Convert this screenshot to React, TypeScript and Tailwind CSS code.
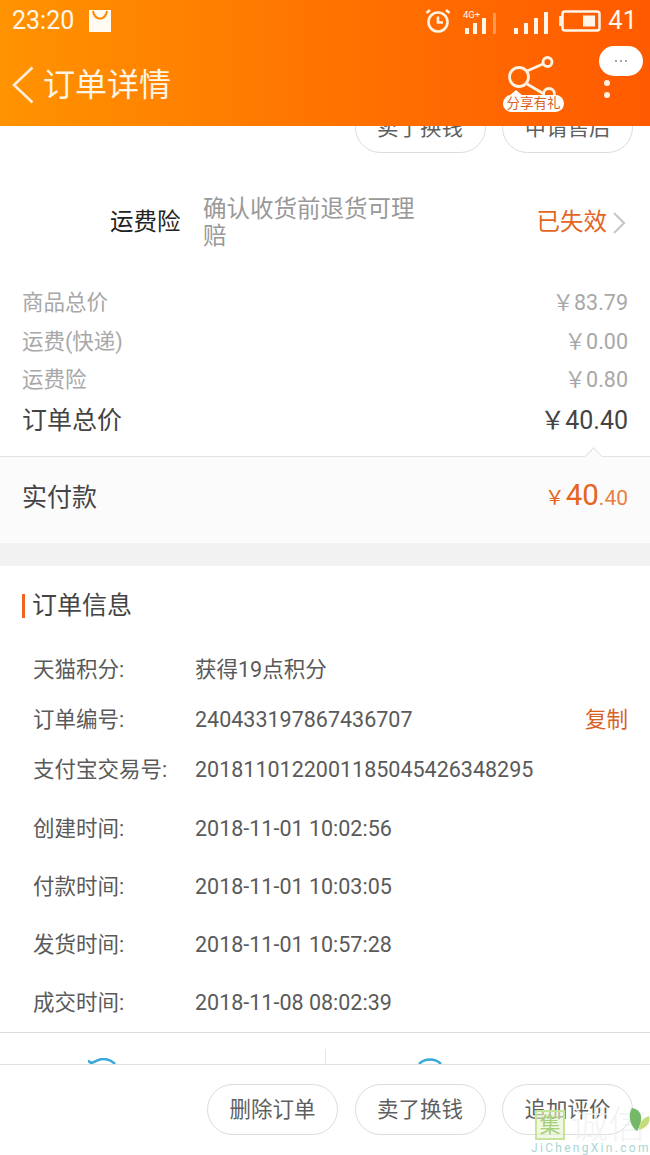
const font = { fontFamily: '"Roboto", "Noto Sans CJK SC", sans-serif' };

function Pill({ label }: { label: string }) {
  return (
    <div className="flex h-[51px] w-[131px] items-center justify-center rounded-[26px] border border-[#dcdcdc] bg-white pt-[2px] text-[21.5px] text-[#5f5f5f]">
      {label}
    </div>
  );
}

function PriceRow({ label, value }: { label: string; value: string }) {
  return (
    <div className="flex h-[38.5px] items-center justify-between text-[21.5px] text-[#a8a8a8]">
      <span>{label}</span>
      <span>{value}</span>
    </div>
  );
}

function InfoRow({ label, value, h, action }: { label: string; value: string; h: string; action?: string }) {
  return (
    <div className={`flex items-center text-[21.5px] text-[#5a5a5a] ${h}`}>
      <span className="w-[162px] shrink-0">{label}</span>
      <span className="flex-1">{value}</span>
      {action && <span className="text-[#d9601f]">{action}</span>}
    </div>
  );
}

function StatusBar() {
  return (
    <div className="flex h-[41px] items-center justify-between pl-[12px] pr-[13px] text-[#fff6ea]">
      <div className="flex items-center gap-[15px]">
        <span className="text-[25px] leading-none">23:20</span>
        <svg width="22" height="22" viewBox="0 0 22 22" fill="#fffaf2">
          <path fillRule="evenodd" d="M0 0h22v22H0z M3 1c1 6 4 8.500 8 8.500S18 7 19 1h-2c-1 4-3 6.500-6 6.500S6 5 5 1z" />
        </svg>
      </div>
      <div className="flex items-center">
        <svg width="26" height="26" viewBox="0 0 26 26" fill="none" stroke="#fff2de" strokeWidth="2.600" className="mr-[12px]">
          <circle cx="13" cy="14" r="9.500" />
          <path d="M13 8.500v6h5" />
          <path d="M1.500 5l3.500-3M24.500 5L21 2" />
        </svg>
        <svg width="36" height="26" viewBox="0 0 36 26" fill="#fff6ea" className="mr-[15px]">
          <text x="0" y="10" fontSize="9.500" fontFamily="Roboto, sans-serif">4G+</text>
          <rect x="2" y="20" width="4" height="6" />
          <rect x="10" y="15" width="4" height="11" />
          <rect x="19" y="10" width="4" height="16" />
          <rect x="30" y="5" width="3" height="21" opacity="0.35" />
        </svg>
        <svg width="34" height="26" viewBox="0 0 34 26" fill="#fff6ea" className="mr-[11px]">
          <rect x="0" y="20" width="4" height="6" />
          <rect x="10" y="15" width="4" height="11" />
          <rect x="20" y="10" width="4" height="16" />
          <rect x="30" y="4" width="4" height="22" />
        </svg>
        <svg width="42" height="22" viewBox="0 0 42 22" fill="none" className="mr-[7px]">
          <path d="M1.500 6v10" stroke="#fff6ea" strokeWidth="2.500" />
          <rect x="3.500" y="1.500" width="37" height="19" rx="2.500" stroke="#fff6ea" strokeWidth="2.500" />
          <rect x="24" y="5.500" width="12" height="11" fill="#fff6ea" />
        </svg>
        <span className="text-[25.500px] leading-none">41</span>
      </div>
    </div>
  );
}

function Header() {
  return (
    <header className="relative z-10 h-[126px] shrink-0 bg-gradient-to-r from-[#ff9300] via-[#ff7300] to-[#ff5a00]">
      <StatusBar />
      <div className="flex h-[85px] items-center pl-[12px] pt-[3px] text-white">
        <svg width="22" height="38" viewBox="0 0 22 38" fill="none" stroke="#ffeeda" strokeWidth="2.600" className="mr-[9px]">
          <path d="M20.500 1.500L2 19l18.500 17.500" />
        </svg>
        <span className="text-[32px] leading-none text-[#fff5e6]">订单详情</span>
      </div>
      <svg width="70" height="64" viewBox="490 50 70 64" fill="none" stroke="#fff3e2" strokeWidth="2.800" className="absolute left-[490px] top-[50px]">
        <circle cx="519" cy="77" r="9.500" />
        <circle cx="547.500" cy="62" r="4.500" />
        <circle cx="549" cy="94" r="5.500" />
        <path d="M527 71l16-7M527 84l17 10" />
      </svg>
      <svg width="14" height="6" viewBox="0 0 14 6" className="absolute left-[509px] top-[90px]">
        <path d="M7 0l7 6H0z" fill="white" />
      </svg>
      <div className="absolute left-[503px] top-[95px] flex h-[17px] w-[61px] items-center justify-center rounded-[9px] bg-white text-[13.500px] leading-none text-[#d9601f]">
        分享有礼
      </div>
      <div className="absolute left-[599px] top-[46px] flex h-[30px] w-[44px] items-center justify-center rounded-[15px] bg-white">
        <div className="flex gap-[3px]">
          <span className="h-[2px] w-[2px] rounded-full bg-[#888]" />
          <span className="h-[2px] w-[2px] rounded-full bg-[#888]" />
          <span className="h-[2px] w-[2px] rounded-full bg-[#888]" />
        </div>
      </div>
      <div className="absolute left-[604px] top-[80px] h-[6px] w-[6px] rounded-full bg-[#fff0e0]" />
      <div className="absolute left-[604px] top-[92px] h-[6px] w-[6px] rounded-full bg-[#fff0e0]" />
    </header>
  );
}

function Watermark() {
  return (
    <div className="absolute bottom-0 right-0 z-20 h-[50px] w-[119px]">
      <div className="absolute left-[4px] top-[5px] flex h-[30px] w-[30px] items-center justify-center border-2 border-[#c5e39a] bg-[#e6f4cf]/60 text-[21px] leading-none text-[#a5cf78]">
        集
      </div>
      <span className="absolute left-[39px] top-[0px] whitespace-nowrap text-[38px] font-light leading-[40px] text-[#eef1f1]/80">
        诚信
      </span>
      <svg width="22" height="24" viewBox="0 0 22 24" className="absolute right-[0px] top-[3px]">
        <path d="M4 0c7 1 10 6 9 13-1 4-2 7-4 10C3 19-1 8 4 0z" fill="#76b86a" />
        <path d="M21 8c2 6-2 12-10 14 0-6 3-12 10-14z" fill="#c4dc7a" />
      </svg>
      <span className="absolute bottom-[1px] left-0 whitespace-nowrap text-[12px] leading-[12px] tracking-[2.300px] text-[#a9d6d1]">
        JiChengXin.com
      </span>
    </div>
  );
}

export default function App() {
  return (
    <div className="relative flex h-[1155px] w-[650px] flex-col overflow-hidden bg-white" style={font}>
      <Header />
      <main className="min-h-0 flex-1 overflow-hidden">
        <div className="-mt-[24px] flex justify-end gap-[16.5px] pr-[17px]">
          <Pill label="卖了换钱" />
          <Pill label="申请售后" />
        </div>

        <div className="mt-[34px] flex h-[72px] items-center pl-[110px] pr-[32px]">
          <span className="w-[93px] shrink-0 text-[23.5px] text-[#222]">运费险</span>
          <span className="w-[230px] text-[23.5px] leading-[27px] text-[#999]">确认收货前退货可理赔</span>
          <span className="flex-1 text-right text-[23.5px] text-[#e5651f]">已失效</span>
          <svg width="14" height="24" viewBox="0 0 14 24" fill="none" stroke="#c8c8c8" strokeWidth="2.200" className="ml-[5px] mr-[-8px]">
            <path d="M2 2l10 10L2 22" />
          </svg>
        </div>

        <div className="mt-[25px] px-[22px]">
          <PriceRow label="商品总价" value="￥83.79" />
          <PriceRow label="运费(快递)" value="￥0.00" />
          <PriceRow label="运费险" value="￥0.80" />
          <div className="flex h-[42px] items-center justify-between text-[25px] text-[#444]">
            <span>订单总价</span>
            <span>￥40.40</span>
          </div>
        </div>

        <div className="relative mt-[14.500px] flex h-[87px] items-center justify-between border-t border-[#e3e3e3] bg-[#fbfbfb] px-[22px]">
          <div className="absolute right-[50px] top-[-7px] h-[13px] w-[13px] rotate-45 border-l border-t border-[#e3e3e3] bg-[#fbfbfb]" />
          <span className="pb-[5px] text-[25px] text-[#444]">实付款</span>
          <span className="flex items-baseline pb-[10px] text-[#e5651f]">
            <span className="mr-[1px] text-[20px]">￥</span>
            <span className="text-[29.500px]">40</span>
            <span className="text-[21px] text-[#e8803f]">.40</span>
          </span>
        </div>

        <div className="h-[22.500px] bg-[#f2f2f2]" />

        <div className="flex h-[80px] items-center pl-[22px]">
          <div className="mr-[7px] h-[24px] w-[3px] bg-[#f0641e]" />
          <span className="text-[25px] text-[#444]">订单信息</span>
        </div>

        <div className="pl-[33px] pr-[22px]">
          <InfoRow label="天猫积分:" value="获得19点积分" h="h-[50px]" />
          <InfoRow label="订单编号:" value="240433197867436707" h="h-[50px]" action="复制" />
          <InfoRow label="支付宝交易号:" value="2018110122001185045426348295" h="h-[50px]" />
          <InfoRow label="创建时间:" value="2018-11-01 10:02:56" h="h-[58px] mt-[5px]" />
          <InfoRow label="付款时间:" value="2018-11-01 10:03:05" h="h-[58px]" />
          <InfoRow label="发货时间:" value="2018-11-01 10:57:28" h="h-[58px]" />
          <InfoRow label="成交时间:" value="2018-11-08 08:02:39" h="h-[57px]" />
        </div>

        <div className="flex h-[32px] items-end overflow-hidden border-t border-[#dcdcdc]">
          <div className="flex w-[326px] items-end justify-between pl-[88px]">
            <svg width="28" height="6" viewBox="0 0 28 6" fill="none" stroke="#38a8dc" strokeWidth="2.500">
              <path d="M0 2.500l3 2.500c5-1 7-4 12-4 5 0 9 2 12 5" />
            </svg>
            <div className="h-[15px] w-[1px] bg-[#e6e6e6]" />
          </div>
          <div className="pl-[92px]">
            <svg width="24" height="6" viewBox="0 0 24 6" fill="none" stroke="#38a8dc" strokeWidth="2.500" className="block">
              <path d="M1 6c3-3 7-4.500 11-4.500S20 3 23 6" />
            </svg>
          </div>
        </div>
      </main>
      <footer className="relative z-10 flex h-[91px] shrink-0 items-start justify-end gap-[16.5px] border-t border-[#e3e3e3] bg-white pr-[17px] pt-[19px]">
        <Pill label="删除订单" />
        <Pill label="卖了换钱" />
        <Pill label="追加评价" />
      </footer>
      <Watermark />
    </div>
  );
}
